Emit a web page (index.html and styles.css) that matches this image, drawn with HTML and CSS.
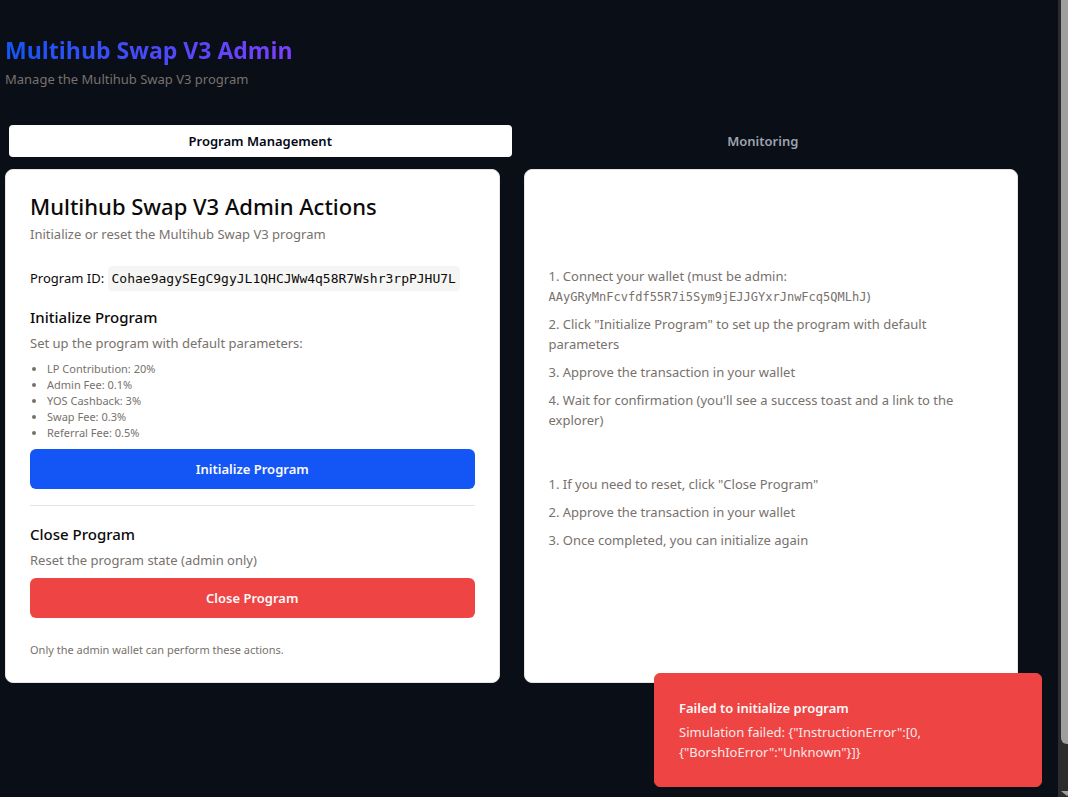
FILE: index.html
```html
<!DOCTYPE html>
<html lang="en">
<head>
<meta charset="utf-8">
<meta name="viewport" content="width=device-width, initial-scale=1">
<title>Multihub Swap V3 Admin</title>
<link rel="stylesheet" href="styles.css">
</head>
<body>
<div class="shell">
  <main class="page">
    <header class="page-header">
      <h1 class="page-title">Multihub Swap V3 Admin</h1>
      <p class="muted">Manage the Multihub Swap V3 program</p>
    </header>

    <div class="tabs" role="tablist">
      <button class="tab tab-active" type="button" role="tab" aria-selected="true">Program Management</button>
      <button class="tab" type="button" role="tab" aria-selected="false">Monitoring</button>
    </div>

    <div class="cards">
      <section class="card">
        <h2 class="card-title">Multihub Swap V3 Admin Actions</h2>
        <p class="muted">Initialize or reset the Multihub Swap V3 program</p>
        <p class="program-id">Program ID: <code class="program-code">Cohae9agySEgC9gyJL1QHCJWw4q58R7Wshr3rpPJHU7L</code></p>

        <div class="action">
          <h3 class="action-title">Initialize Program</h3>
          <p class="muted">Set up the program with default parameters:</p>
          <ul class="params">
            <li>LP Contribution: 20%</li>
            <li>Admin Fee: 0.1%</li>
            <li>YOS Cashback: 3%</li>
            <li>Swap Fee: 0.3%</li>
            <li>Referral Fee: 0.5%</li>
          </ul>
          <button class="button button-primary" type="button">Initialize Program</button>
        </div>

        <div class="action action-divided">
          <h3 class="action-title">Close Program</h3>
          <p class="muted">Reset the program state (admin only)</p>
          <button class="button button-danger" type="button">Close Program</button>
        </div>

        <p class="note">Only the admin wallet can perform these actions.</p>
      </section>

      <section class="card guide">
        <div class="steps">
          <p>1. Connect your wallet (must be admin: <code class="wallet-code">AAyGRyMnFcvfdf55R7i5Sym9jEJJGYxrJnwFcq5QMLhJ</code>)</p>
          <p>2. Click "Initialize Program" to set up the program with default parameters</p>
          <p>3. Approve the transaction in your wallet</p>
          <p>4. Wait for confirmation (you'll see a success toast and a link to the explorer)</p>
        </div>
        <div class="steps">
          <p>1. If you need to reset, click "Close Program"</p>
          <p>2. Approve the transaction in your wallet</p>
          <p>3. Once completed, you can initialize again</p>
        </div>
      </section>
    </div>
  </main>

  <div class="scrollbar" aria-hidden="true">
    <div class="scroll-thumb"></div>
    <svg class="scroll-arrow" width="14" height="7" viewBox="0 0 14 7"><path d="M0 1H11L6 6Z" fill="#a0a0a0"/></svg>
  </div>
</div>

<div class="toast" role="alert">
  <p class="toast-title">Failed to initialize program</p>
  <p class="toast-text">Simulation failed: {"InstructionError":[0, {"BorshIoError":"Unknown"}]}</p>
</div>
</body>
</html>
```

FILE: styles.css
```css
* {
  box-sizing: border-box;
  margin: 0;
  padding: 0;
}

body {
  background: #0a0e17;
  color: #0c0a09;
  font: 13px/20px "Noto Sans", "Open Sans", sans-serif;
}

button {
  border: 0;
  font: inherit;
  cursor: pointer;
}

.shell {
  display: flex;
  min-height: 100vh;
}

.page {
  flex: 1;
  min-width: 0;
  padding: 34px 40px 40px 5px;
}

.page-header {
  margin-bottom: 32px;
}

.page-title {
  width: fit-content;
  margin-bottom: 3px;
  font-family: "Open Sans", "Noto Sans", sans-serif;
  font-size: 23px;
  line-height: 32px;
  font-weight: 700;
  background: linear-gradient(90deg, #1456f5, #7c3fff);
  background-clip: text;
  -webkit-background-clip: text;
  color: transparent;
}

.muted {
  color: #78716c;
}

.tabs {
  display: grid;
  grid-template-columns: 1fr 1fr;
  padding: 4px;
  margin-bottom: 8px;
}

.tab {
  padding: 6px 12px;
  border-radius: 4px;
  background: transparent;
  color: #9ca3af;
  font-weight: 600;
}

.tab-active {
  background: #fff;
  color: #020817;
}

.cards {
  display: grid;
  grid-template-columns: 1fr 1fr;
  gap: 24px;
}

.card {
  min-width: 0;
  padding: 24px;
  border: 1px solid #e7e5e4;
  border-radius: 8px;
  background: #fff;
}

.card-title {
  margin-bottom: 6px;
  font-size: 22px;
  line-height: 24px;
  font-weight: 500;
}

.program-id {
  margin: 24px 0 17px;
}

.program-code {
  padding: 5px 4px;
  border-radius: 4px;
  background: #f5f5f4;
  font: 13px "DejaVu Sans Mono", monospace;
}

.action-title {
  margin-bottom: 4px;
  font-size: 15px;
  line-height: 24px;
  font-weight: 500;
}

.params {
  margin-top: 8px;
  padding-left: 17px;
  color: #78716c;
  font-size: 11px;
  line-height: 16px;
}

.button {
  display: block;
  width: 100%;
  margin-top: 8px;
  padding: 10px 16px;
  border-radius: 6px;
  color: #fafaf9;
  font-weight: 600;
}

.button-primary {
  background: #1456f5;
}

.button-danger {
  background: #ef4444;
}

.action-divided {
  margin-top: 16px;
  padding-top: 16px;
  border-top: 1px solid #e5e5e5;
}

.note {
  margin-top: 24px;
  color: #78716c;
  font-size: 11px;
  line-height: 16px;
}

.guide {
  display: flex;
  flex-direction: column;
  gap: 44px;
  padding-top: 96px;
  color: #78716c;
}

.steps {
  display: grid;
  gap: 8px;
}

.wallet-code {
  font: 12px "DejaVu Sans Mono", monospace;
}

.scrollbar {
  display: flex;
  flex-direction: column;
  justify-content: space-between;
  width: 10px;
  padding-left: 3px;
  overflow: hidden;
  background: #2c2c2c;
}

.scroll-thumb {
  width: 14px;
  height: 744px;
  border-radius: 0 0 6px 6px;
  background: #9f9f9f;
}

.scroll-arrow {
  display: block;
}

.toast {
  position: fixed;
  right: 26px;
  bottom: 10px;
  width: 388px;
  padding: 24px 96px 24px 24px;
  border: 1px solid #ef4444;
  border-radius: 6px;
  background: #ef4444;
  color: #fafaf9;
}

.toast-title {
  margin-bottom: 4px;
  font-weight: 600;
}

.toast-text {
  opacity: 0.9;
}
```
